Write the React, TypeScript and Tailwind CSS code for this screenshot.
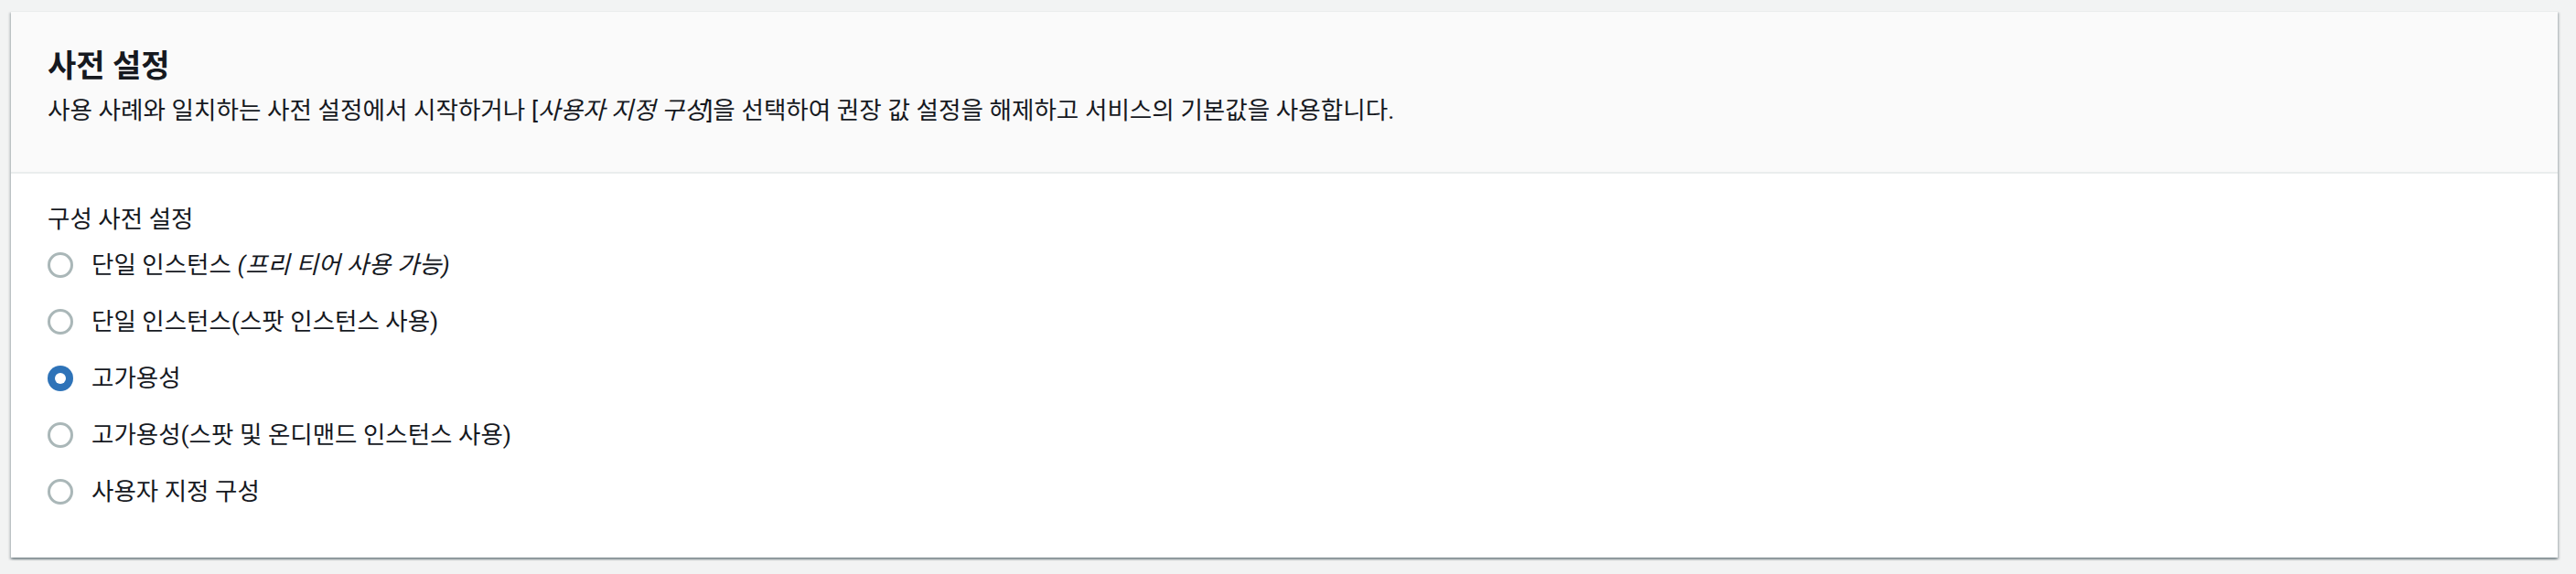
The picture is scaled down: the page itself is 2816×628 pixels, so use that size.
const presets = [
  { id: "single-free", label: "단일 인스턴스", note: "(프리 티어 사용 가능)" },
  { id: "single-spot", label: "단일 인스턴스(스팟 인스턴스 사용)" },
  { id: "ha", label: "고가용성" },
  { id: "ha-spot", label: "고가용성(스팟 및 온디맨드 인스턴스 사용)" },
  { id: "custom", label: "사용자 지정 구성" },
];

function Radio({ checked }: { checked: boolean }) {
  if (checked) {
    return (
      <span className="flex h-[28px] w-[28px] shrink-0 items-center justify-center rounded-full bg-[#2e73b8]">
        <span className="h-[12px] w-[12px] rounded-full bg-white" />
      </span>
    );
  }
  return <span className="h-[28px] w-[28px] shrink-0 rounded-full border-[3px] border-[#aab7b8] bg-white" />;
}

export default function App() {
  const selected = "ha";
  return (
    <div className="min-h-[628px] bg-[#f2f3f3] pt-[12px] pb-[18px] pl-[12px] pr-[20px] font-['Roboto','Noto_Sans_CJK_KR',sans-serif] text-[#16191f]">
      <div className="border-t border-[#eaeded] bg-white shadow-[0_2px_2px_0_rgba(0,28,36,0.3),2px_2px_2px_0_rgba(0,28,36,0.15),-2px_2px_2px_0_rgba(0,28,36,0.15)]">
        <div className="border-b-2 border-[#eaeded] bg-[#fafafa] pt-[39px] pb-[47px] px-[40px]">
          <h2 className="text-[34px] font-bold leading-[40px]">사전 설정</h2>
          <p className="mt-[9px] text-[26.6px] leading-[40px]">
            사용 사례와 일치하는 사전 설정에서 시작하거나 [<i>사용자 지정 구성</i>]을 선택하여 권장 값 설정을 해제하고 서비스의 기본값을 사용합니다.
          </p>
        </div>
        <div className="pt-[30px] pb-[52px] px-[40px]">
          <div className="text-[26.5px] leading-[40px]">구성 사전 설정</div>
          <div className="mt-[10px] flex flex-col gap-[22px]">
            {presets.map((p) => (
              <label key={p.id} className="flex items-center gap-[20px] text-[26.5px] leading-[40px]">
                <Radio checked={p.id === selected} />
                <span>
                  {p.label}
                  {p.note && <i> {p.note}</i>}
                </span>
              </label>
            ))}
          </div>
        </div>
      </div>
    </div>
  );
}
